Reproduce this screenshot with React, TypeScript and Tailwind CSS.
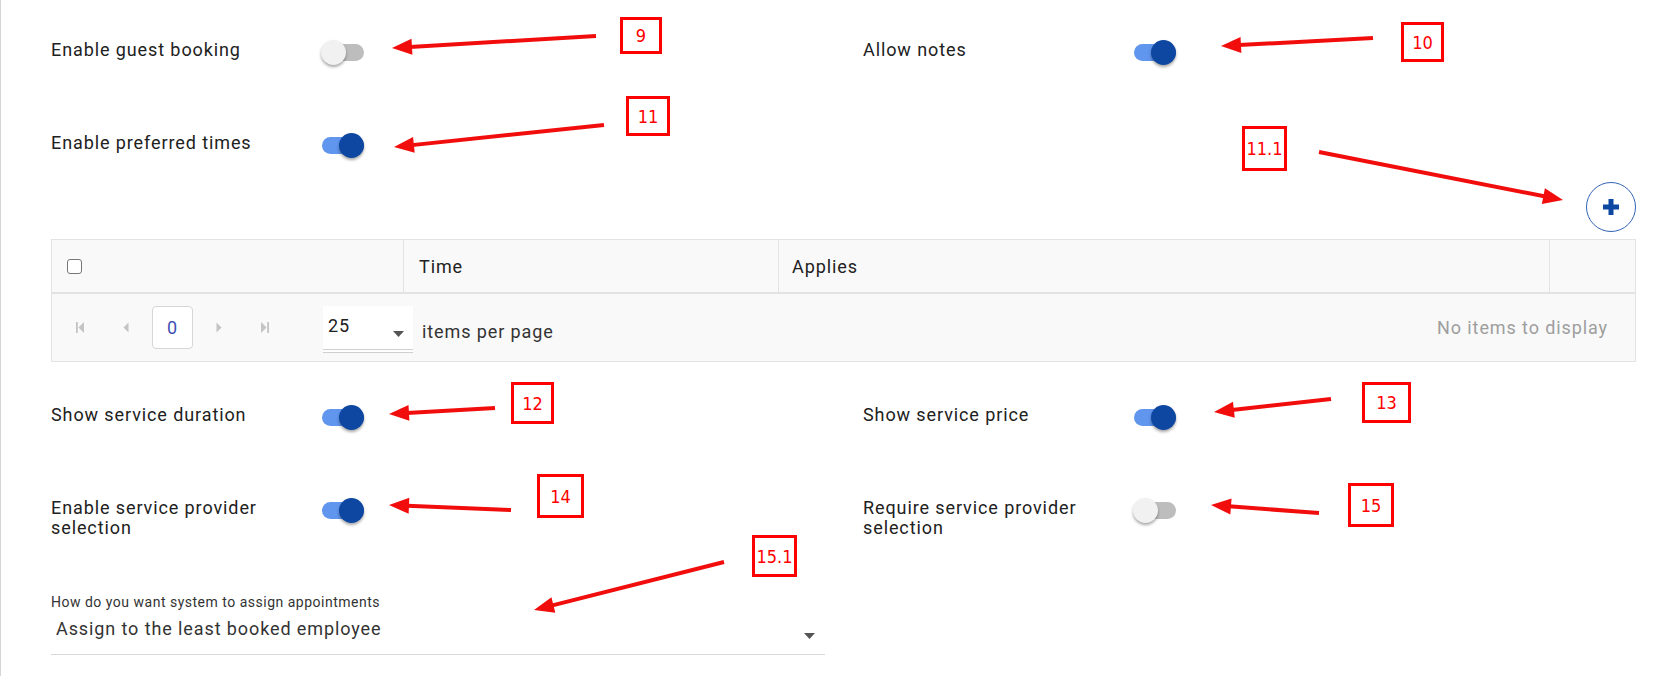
const font = { fontFamily: "Roboto, 'Liberation Sans', sans-serif" };

function Toggle({ on }: { on?: boolean }) {
  return (
    <div className="relative h-[24px] w-[43px] shrink-0">
      <div
        className={`absolute left-[1px] right-0 top-[4px] h-[17px] rounded-full ${
          on ? "bg-[#6196ee]" : "bg-[#bdbdbd]"
        }`}
      />
      <div
        className={`absolute top-0 h-[25px] w-[25px] rounded-full shadow-[0_2px_3px_rgba(0,0,0,0.35)] ${
          on ? "right-0 bg-[#0d47a1]" : "left-0 bg-[#f1f1f1]"
        }`}
      />
    </div>
  );
}

function SettingRow({ label, on }: { label: string; on?: boolean }) {
  return (
    <div className="flex items-start">
      <div className="w-[270px] pr-[20px] text-[18px] leading-[20px] tracking-[0.9px] text-[#212121]">
        {label}
      </div>
      <Toggle on={on} />
    </div>
  );
}

function PagerIcon({ kind }: { kind: "first" | "prev" | "next" | "last" }) {
  return (
    <svg width="12" height="13" viewBox="0 0 12 13" fill="#c4c4c4">
      {kind === "first" && (
        <>
          <rect x="2" y="1" width="1.8" height="11" />
          <polygon points="10,1 10,12 4.5,6.5" />
        </>
      )}
      {kind === "prev" && <polygon points="8.5,1.5 8.5,11.5 3.5,6.5" />}
      {kind === "next" && <polygon points="3.5,1.5 3.5,11.5 8.5,6.5" />}
      {kind === "last" && (
        <>
          <polygon points="2,1 2,12 7.5,6.5" />
          <rect x="8.2" y="1" width="1.8" height="11" />
        </>
      )}
    </svg>
  );
}

const arrows: [number, number, number, number][] = [
  [595, 36, 391, 48],
  [1372, 38, 1220, 46],
  [603, 125, 393, 147],
  [1318, 152, 1562, 200],
  [494, 408, 388, 414],
  [1330, 399, 1213, 412],
  [510, 510, 388, 505],
  [1318, 513, 1210, 505],
  [723, 562, 533, 610],
];

const boxes = [
  { n: "9", x: 619, y: 17, w: 42, h: 37 },
  { n: "10", x: 1400, y: 22, w: 43, h: 40 },
  { n: "11", x: 625, y: 96, w: 44, h: 40 },
  { n: "11.1", x: 1241, y: 126, w: 45, h: 45 },
  { n: "12", x: 510, y: 382, w: 43, h: 42 },
  { n: "13", x: 1361, y: 382, w: 49, h: 41 },
  { n: "14", x: 536, y: 474, w: 47, h: 44 },
  { n: "15", x: 1347, y: 483, w: 46, h: 44 },
  { n: "15.1", x: 751, y: 535, w: 45, h: 42 },
];

function Annotations() {
  return (
    <div className="pointer-events-none absolute inset-0">
      <svg width="1676" height="676" className="absolute left-0 top-0">
        {arrows.map(([x1, y1, x2, y2], i) => {
          const dx = x2 - x1;
          const dy = y2 - y1;
          const len = Math.hypot(dx, dy);
          const ux = dx / len;
          const uy = dy / len;
          const bx = x2 - ux * 20;
          const by = y2 - uy * 20;
          const px = -uy * 8;
          const py = ux * 8;
          return (
            <g key={i}>
              <line x1={x1} y1={y1} x2={bx + ux * 2} y2={by + uy * 2} stroke="#f20d0d" strokeWidth="4" />
              <polygon
                points={`${x2},${y2} ${bx + px},${by + py} ${bx - px},${by - py}`}
                fill="#f20d0d"
              />
            </g>
          );
        })}
      </svg>
      {boxes.map((b) => (
        <div
          key={b.n}
          className="absolute flex items-center justify-center border-[3px] border-[#ff0000] bg-white text-[18px] font-light text-[#ff0000]"
          style={{
            left: b.x,
            top: b.y,
            width: b.w,
            height: b.h,
            fontFamily: "'Liberation Sans Narrow', 'DejaVu Sans Condensed', 'Liberation Sans', sans-serif",
          }}
        >
          {b.n}
        </div>
      ))}
    </div>
  );
}

export default function App() {
  return (
    <div
      className="relative h-[676px] w-[1676px] overflow-hidden border-l border-[#d4d4d4] bg-white pl-[50px] pr-[40px] pt-[40px]"
      style={font}
    >
      <div className="grid grid-cols-[812px_1fr] gap-y-[69px]">
        <SettingRow label="Enable guest booking" />
        <SettingRow label="Allow notes" on />
        <SettingRow label="Enable preferred times" on />
      </div>

      <div className="mt-[25px] flex justify-end">
        <button className="flex h-[50px] w-[50px] items-center justify-center rounded-full border border-[#3163b5] bg-white">
          <svg width="20" height="20" viewBox="0 0 20 20">
            <path d="M10 2v16M2 10h16" stroke="#0d47a1" strokeWidth="5" />
          </svg>
        </button>
      </div>

      <div className="mt-[7px] border border-[#e3e3e3] bg-[#f9f9f9] tracking-[0.9px]">
        <div className="grid h-[54px] grid-cols-[352px_375px_771px_1fr] border-b-2 border-[#e3e3e3] text-[18px] text-[#212121]">
          <div className="flex items-center border-r border-[#e3e3e3] pl-[15px]">
            <div className="h-[15px] w-[15px] rounded-[3px] border border-[#777] bg-white" />
          </div>
          <div className="flex items-center border-r border-[#e3e3e3] pl-[15px]">Time</div>
          <div className="flex items-center border-r border-[#e3e3e3] pl-[13px]">Applies</div>
          <div />
        </div>
        <div className="flex h-[67px] items-center pl-[5px] pr-[27px]">
          <div className="flex w-[46px] justify-center">
            <PagerIcon kind="first" />
          </div>
          <div className="flex w-[46px] justify-center">
            <PagerIcon kind="prev" />
          </div>
          <div className="flex w-[47px] justify-center">
            <div className="flex h-[43px] w-[41px] items-center justify-center rounded-[4px] border border-[#d6d6d6] bg-white text-[18px] text-[#3f51b5]">
              0
            </div>
          </div>
          <div className="flex w-[46px] justify-center">
            <PagerIcon kind="next" />
          </div>
          <div className="flex w-[46px] justify-center">
            <PagerIcon kind="last" />
          </div>
          <div className="ml-[35px] mt-[3px] flex h-[47px] w-[90px] items-start border-b-[4px] border-double border-[#cfcfcf] bg-white pl-[5px] pr-[9px] pt-[8px]">
            <span className="text-[18px] leading-[24px] text-[#212121]">25</span>
            <svg className="ml-auto mt-[17px]" width="11" height="6" viewBox="0 0 11 6">
              <polygon points="0,0 11,0 5.5,6" fill="#555" />
            </svg>
          </div>
          <span className="ml-[9px] mt-[7px] text-[18px] text-[#333]">items per page</span>
          <span className="ml-auto text-[18px] text-[#9e9e9e]">No items to display</span>
        </div>
      </div>

      <div className="mt-[43px] grid grid-cols-[812px_1fr] gap-y-[69px]">
        <SettingRow label="Show service duration" on />
        <SettingRow label="Show service price" on />
        <SettingRow label="Enable service provider selection" on />
        <SettingRow label="Require service provider selection" />
      </div>

      <div className="mt-[56px] w-[774px]">
        <div className="text-[14px] leading-[16px] tracking-[0.5px] text-[#333]">
          How do you want system to assign appointments
        </div>
        <div className="mt-[7px] flex items-center border-b border-[#d9d9d9] pb-[13px] pl-[5px] pr-[10px]">
          <span className="text-[18px] leading-[24px] tracking-[0.9px] text-[#333]">
            Assign to the least booked employee
          </span>
          <svg className="ml-auto mt-[14px]" width="11" height="6" viewBox="0 0 11 6">
            <polygon points="0,0 11,0 5.5,6" fill="#555" />
          </svg>
        </div>
      </div>

      <Annotations />
    </div>
  );
}
